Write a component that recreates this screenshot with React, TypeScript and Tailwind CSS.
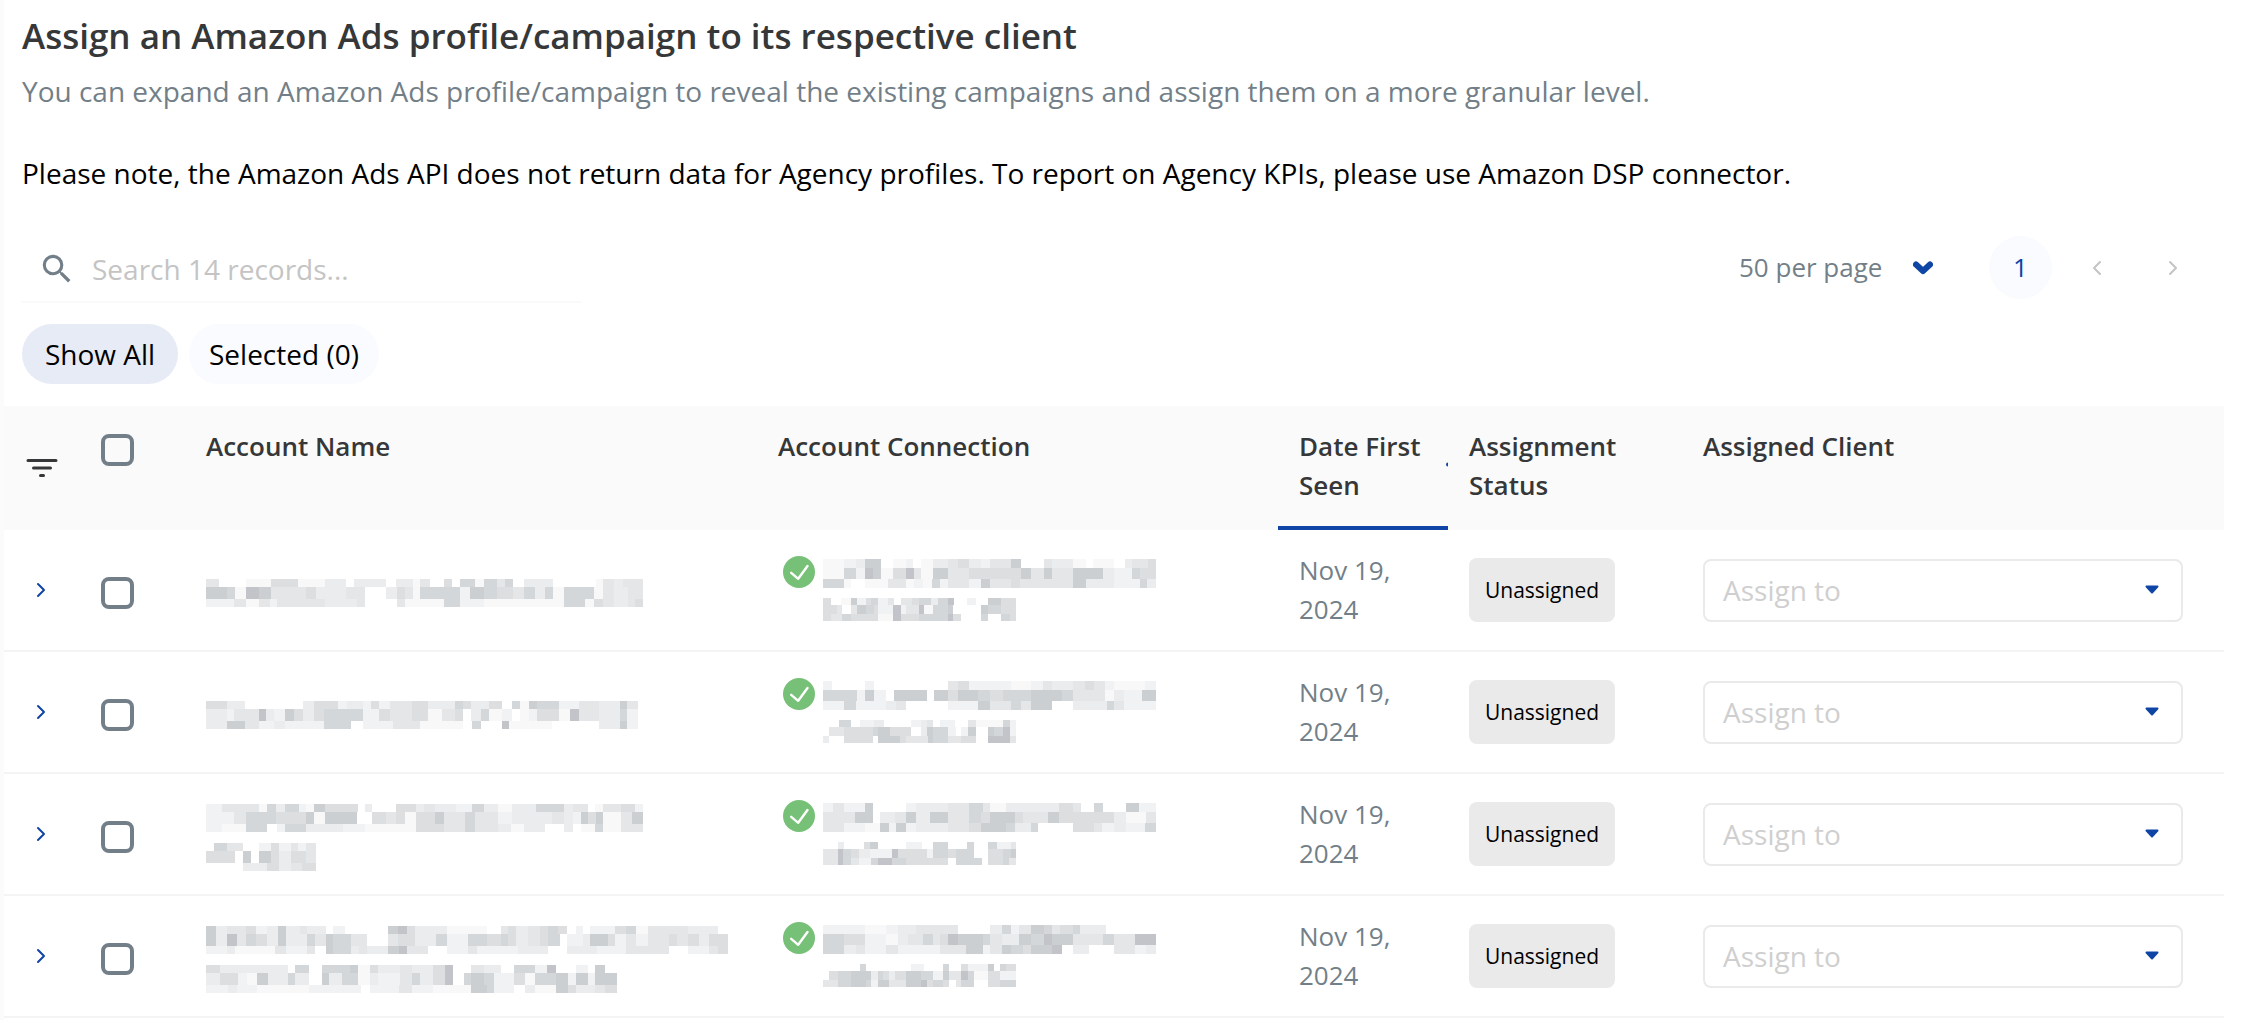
import React, { useState } from 'react';
import { MdSearch } from 'react-icons/md';

// shades used by the masked names, w is left blank
const shades: Record<string, string> = {
  a: '#f8f8f9', b: '#f1f2f4', c: '#ebecee', d: '#e5e6e8',
  e: '#dddee0', f: '#d4d7da', g: '#cccfd2', h: '#c2c4ca'
};

type MaskLine = { start: number; bands: string[] };

type Row = { id: number; name: MaskLine[]; connection: MaskLine[]; date: string; status: string };

// each band is a list of "end position + shade"
const rows: Row[] = [
  {
    id: 1,
    name: [
      { start: 18, bands: [
        '57d 138w 213a 294e 375a 438c 462w 495c 558c 588w 639c 660a 690d 732w 756e 780w 825f 852a 891f 915d 939f 972w 1059c 1188w 1209a 1242d 1269c 1329d',
        '81g 105f 138a 177h 213g 255d 318d 348e 438c 471d 495d 558w 591c 615e 639d 660a 780f 810b 852g 891f 939e 972d 1005f 1035c 1059f 1092a 1182f 1209a 1242d 1284c 1329d',
        '102b 138d 177a 210d 231b 255d 348d 375d 471c 495d 591w 615d 732a 780f 852b 1092a 1155f 1182a 1209e 1242d 1284c 1305d 1329e'
      ] }
    ],
    connection: [
      { start: 159, bands: [
        '222a 258b 285c 333g 369w 408a 429b 453w 489a 534c 564d 597e 633c 660b 723d 753g 822w 846d 909c 948a 969w 999a 1032a 1065w 1086c 1134d 1158e',
        '222a 258f 285b 309h 333g 369a 408e 432h 453d 489a 534g 597d 633e 660e 723e 753e 783g 822d 846g 909d 948g 999g 1032c 1086b 1110f 1158e',
        '222f 243a 285w 354a 408d 432a 459b 486a 510f 534b 597d 633b 660g 723d 750e 909d 948g 1032c 1110b 1131f 1158c'
      ] },
      { start: 156, bands: [
        '180e 210w 240a 258g 285b 300e 321f 351b 369d 390w 423d 444e 480f 501c 531f 549h 588w 615b 651w 690g 735e',
        '198e 213d 240w 258d 285g 309f 321e 366b 390h 405b 444d 459h 486a 531f 546g 570w 630w 651g 690f 735e',
        '180e 213d 240f 285e 321e 366a 390h 444e 459f 531f 546h 570e 630w 651f 690w 717f 735e'
      ] }
    ],
    date: 'Nov 19, 2024',
    status: 'Unassigned'
  },
  {
    id: 2,
    name: [
      { start: 18, bands: [
        '81e 135c 309w 342c 414e 441b 489c 513b 537e 570b 636d 684e 765c 789f 813e 867c 906e 936w 960f 987a 1011g 1077f 1137b 1197d 1260c 1281g 1314d',
        '81c 102b 177d 198h 222c 255b 282g 309e 342c 372e 462f 489f 513b 537b 570e 636d 684e 726a 765d 789e 813w 843c 867f 906a 936b 960w 987a 1011b 1077e 1110a 1137h 1176d 1197d 1260c 1281f 1314b',
        '81c 135g 177d 222b 255c 372b 453f 489w 579b 660d 726a 789a 816w 843f 906w 927h 1056a 1197w 1260c 1281g 1314b'
      ] }
    ],
    connection: [
      { start: 159, bands: [
        '186b 285w 312b 372w 534w 564d 597e 624b 723b 783a 819b 846d 909c 945d 972e 1005d 1032b 1125a 1158b',
        '222f 261f 285b 312g 348b 372w 429g 471g 492w 534g 564e 624g 660f 699e 783f 876g 909f 948d 1005d 1032a 1062c 1089b 1116b 1158g',
        '222b 258f 348b 378c 408d 471w 534w 624b 660g 723d 753f 783d 846g 909w 951c 1011c 1032f 1062d 1158b'
      ] },
      { start: 156, bands: [
        '204w 240f 267w 309b 339c 420w 450b 468c 486d 507w 552b 591w 615d 696a 717f 735b',
        '174w 219d 240e 306e 321f 357g 405e 420e 450w 468c 486g 531f 555b 570w 591b 615g 651w 669g 696f 717h 735b',
        '174c 219w 240e 306e 321w 387g 405e 450d 471d 486g 531f 570d 615e 651w 717h 735d'
      ] }
    ],
    date: 'Nov 19, 2024',
    status: 'Unassigned'
  },
  {
    id: 3,
    name: [
      { start: 12, bands: [
        '58b 166d 189a 215f 241c 282f 302b 325a 357g 406e 453e 473w 494c 563w 621e 645c 677d 738c 784b 819f 859c 900a 970c 1051f 1077c 1121d 1141w 1164a 1217d 1257e 1281b',
        '93b 128d 189f 215f 302e 325g 357a 450g 494w 534e 563d 589e 621a 677e 703g 764d 793f 859d 900b 970c 1016c 1051d 1077c 1101b 1121g 1144e 1164g 1217a 1249d 1281g',
        '58b 128a 189f 218w 241b 302f 409c 473b 589a 621a 703e 764d 793f 859d 897c 935a 996c 1051w 1077c 1101w 1141a 1164f 1217a 1281d'
      ] },
      { start: 12, bands: [
        '35w 73f 119d 166w 200b 224e 258b 278d 302b 331d',
        '35e 73e 96e 119w 142g 166w 200g 224e 258c 302e 331d',
        '119w 189c 224e 258c 290d 331e'
      ] }
    ],
    connection: [
      { start: 159, bands: [
        '189b 222d 285b 309g 408w 438b 534c 597d 639f 660d 708a 783c 867c 909e 933d 972w 999f 1068w 1107g 1158b',
        '222d 255d 309g 330w 375c 408d 438g 480c 534g 597d 633f 660e 735g 759e 804d 834d 867g 909e 972e 1032e 1068c 1128a 1158d',
        '222d 255b 285b 330a 357g 378b 408g 438b 534c 597d 633e 708g 735f 783c 804f 909w 972e 996d 1032b 1068c 1125b 1158f'
      ] },
      { start: 156, bands: [
        '201w 219c 279w 297e 321g 405w 453b 486w 531f 588w 609f 651w 678f 720b 735d',
        '201d 216h 240f 264e 297c 321b 363b 381h 405e 468e 486b 531f 555e 570f 609f 633w 651w 696e 720f 735g',
        '201d 216h 240f 264d 279b 300b 321f 363h 405f 468e 531e 555w 609f 633f 651w 696e 714f 735d'
      ] }
    ],
    date: 'Nov 19, 2024',
    status: 'Unassigned'
  },
  {
    id: 4,
    name: [
      { start: 17, bands: [
        '46g 78c 134d 163e 195b 226c 250g 290c 310d 366c 386w 421b 546w 575g 601h 624e 717c 833a 874w 894d 918e 951c 987d 1010e 1038f 1066e 1092w 1112b 1132w 1205b 1237e 1266f 1301a 1417d 1504c 1533w',
        '46g 78c 107h 134d 163f 195e 226c 250g 311c 334f 366d 386g 438f 485d 546w 575d 601e 624e 685c 717f 778b 833f 874e 894f 918e 951c 987d 1010e 1045f 1066w 1112b 1132c 1185g 1205e 1237b 1266d 1301b 1362d 1385e 1417d 1449e 1478c 1533e',
        '78b 102c 218a 250d 311b 334d 366w 386g 438f 462c 485d 546c 578g 601h 662d 717w 778b 804d 922b 1010c 1066w 1153c 1237b 1362d 1417w 1478b 1504d 1533e'
      ] },
      { start: 15, bands: [
        '55e 78c 134c 253c 273w 314f 351w 409f 433f 456g 491a 514e 578c 613d 674c 709e 732h 784w 822d 851c 871c 909w 970f 1005b 1031h 1089w 1124b 1144w 1173g 1208w',
        '55c 107e 134b 163a 195g 253c 273f 314c 351w 372g 409c 456f 491a 514c 578b 613d 636f 674c 709e 732h 764w 784f 822g 851f 909b 941e 970a 1031f 1066g 1089b 1124g 1144b 1208g',
        '78b 105c 163b 253a 314a 465b 491w 575b 613d 674b 784a 830g 851f 909b 941w 970c 1031a 1066g 1089e 1144c 1173d 1208e'
      ] }
    ],
    connection: [
      { start: 159, bands: [
        '222b 285b 348a 384b 438c 498d 564d 660w 696c 723f 747b 783d 822g 846f 870d 909e 930f 1008c 1158w',
        '222f 285e 348b 384a 414c 459d 489f 510d 534e 564h 639g 660f 696d 747c 783g 822f 846h 909g 930d 999d 1032f 1095d 1158h',
        '222f 258c 285d 348b 384d 438b 510b 588d 639g 660b 696d 723g 759f 783e 846g 876h 909w 957c 1032w 1095d 1128b 1158c'
      ] },
      { start: 156, bands: [
        '267w 285f 336w 420w 459b 516w 534f 570w 591e 651b 669g 687w 705f 735e',
        '174w 201e 240f 300g 321c 336f 354e 372c 405e 420g 450g 486f 516b 534g 570d 591h 609f 651a 687e 735b',
        '201d 240f 285g 300f 321b 354g 405d 450g 468h 486e 516f 534e 555w 570d 609f 651w 687e 735f'
      ] }
    ],
    date: 'Nov 19, 2024',
    status: 'Unassigned'
  }
];

const bandTop = [0, 3, 7];
const bandHeight = [3, 4, 3];

const Mask = ({ line, unit, className }: { line: MaskLine; unit: number; className: string }) => {
  const cells: { x: number; w: number; band: number; fill: string }[] = [];
  let end = line.start;
  line.bands.forEach((band, i) => {
    let x = line.start;
    band.split(' ').forEach(run => {
      const next = parseInt(run, 10);
      const key = run.slice(-1);
      if (key !== 'w') cells.push({ x, w: next - x, band: i, fill: shades[key] });
      x = next;
    });
    end = Math.max(end, x);
  });

  return (
    <svg
      className={className}
      style={{ width: Math.round((end - line.start) / unit) }}
      viewBox={`${line.start} 0 ${end - line.start} 10`}
      preserveAspectRatio="none"
      shapeRendering="crispEdges"
      aria-hidden="true"
    >
      {cells.map(c => (
        <rect key={`${c.band}-${c.x}`} x={c.x} y={bandTop[c.band]} width={c.w} height={bandHeight[c.band]} fill={c.fill} />
      ))}
    </svg>
  );
};

const Chevron = ({ left }: { left?: boolean }) => (
  <svg className="w-[10px] h-[16px]" viewBox="0 0 10 16" fill="none" stroke="currentColor" strokeWidth="2" strokeLinecap="round" strokeLinejoin="round">
    <path d={left ? 'M8 2 2 8l6 6' : 'M2 2l6 6-6 6'} />
  </svg>
);

const Checkbox = ({ label, checked, onChange }: { label: string; checked: boolean; onChange: () => void }) => (
  <input
    type="checkbox"
    aria-label={label}
    checked={checked}
    onChange={onChange}
    className="block appearance-none w-[33px] h-8 rounded-lg border-4 border-[#737f88] checked:bg-[#0f45a5] cursor-pointer"
  />
);

export default function App() {
  const [search, setSearch] = useState('');
  const [tab, setTab] = useState<'all' | 'selected'>('all');
  const [selected, setSelected] = useState<number[]>([]);

  const toggle = (id: number) => setSelected(s => (s.includes(id) ? s.filter(x => x !== id) : [...s, id]));
  const toggleAll = () => setSelected(s => (s.length === rows.length ? [] : rows.map(r => r.id)));

  const visible = tab === 'all' ? rows : rows.filter(r => selected.includes(r.id));

  return (
    <main className="min-h-screen bg-white border-l-4 border-[#fbfbfb] pr-5 font-['Open_Sans',sans-serif] text-[28px] text-black">
      <div className="pl-[18px] pt-3">
        <h1 className="text-[35px] leading-[48px] font-semibold text-[#363738]">Assign an Amazon Ads profile/campaign to its respective client</h1>
        <p className="mt-[11px] leading-10 text-[#737f88]">You can expand an Amazon Ads profile/campaign to reveal the existing campaigns and assign them on a more granular level.</p>
        <p className="mt-[42px] leading-10">Please note, the Amazon Ads API does not return data for Agency profiles. To report on Agency KPIs, please use Amazon DSP connector.</p>

        {/* Toolbar */}
        <div className="mt-[43px] flex items-start justify-between">
          <label className="flex items-center gap-4 w-[560px] h-[67px] pl-4 border-b-2 border-[#fafafa]">
            <MdSearch className="size-[38px] shrink-0 text-[#737f88]" />
            <input
              type="text"
              aria-label="Search records"
              placeholder="Search 14 records..."
              value={search}
              onChange={e => setSearch(e.target.value)}
              className="w-full bg-transparent outline-none placeholder:text-[#c4c4c4]"
            />
          </label>

          <div className="flex items-center gap-[13px] h-[63px] pr-5 text-[26px]">
            <div className="relative mr-[43px]">
              <select aria-label="Records per page" className="appearance-none w-[194px] bg-transparent text-[#737f88] outline-none">
                <option>50 per page</option>
                <option>100 per page</option>
              </select>
              <svg className="absolute right-0 top-1/2 -translate-y-1/2 w-5 h-[14px] pointer-events-none" viewBox="0 0 20 14" fill="none">
                <path d="M3 3.5l7 6.5 7-6.5" stroke="#0f45a5" strokeWidth="6" strokeLinecap="round" strokeLinejoin="round" />
              </svg>
            </div>
            <button className="size-[63px] rounded-full bg-[#fafbfe] text-[#0f45a5]">1</button>
            <button aria-label="Previous page" className="size-[63px] flex items-center justify-center text-[#c4c4c4]"><Chevron left /></button>
            <button aria-label="Next page" className="size-[63px] flex items-center justify-center text-[#c4c4c4]"><Chevron /></button>
          </div>
        </div>

        {/* Tabs */}
        <div className="mt-[21px] flex gap-[11px]">
          <button onClick={() => setTab('all')} className={`h-[60px] min-w-[156px] px-5 rounded-full ${tab === 'all' ? 'bg-[#e7ebf6]' : 'bg-[#fafbfe]'}`}>
            Show All
          </button>
          <button onClick={() => setTab('selected')} className={`h-[60px] min-w-[156px] px-5 rounded-full ${tab === 'selected' ? 'bg-[#e7ebf6]' : 'bg-[#fafbfe]'}`}>
            Selected ({selected.length})
          </button>
        </div>
      </div>

      <table className="mt-[22px] w-full table-fixed border-separate border-spacing-0 text-[26px] leading-[39px]">
        <colgroup>
          <col className="w-[77px]" />
          <col className="w-[104px]" />
          <col />
          <col className="w-[521px]" />
          <col className="w-[170px]" />
          <col className="w-[234px]" />
          <col className="w-[542px]" />
        </colgroup>
        <thead>
          <tr className="h-[124px] bg-[#fafafa] text-left align-top text-[#363738]">
            <th className="align-middle pl-[22px]">
              <button aria-label="Filter" className="block">
                <svg className="w-8 h-5" viewBox="0 0 32 20" fill="none" stroke="#363738" strokeWidth="3" strokeLinecap="round">
                  <path d="M2 2.5h28M7.500 10h17M14.500 17.500h3" />
                </svg>
              </button>
            </th>
            <th className="pl-5 pt-7"><Checkbox label="Select all" checked={selected.length === rows.length} onChange={toggleAll} /></th>
            <th className="pl-[21px] pt-[21px] font-semibold">Account Name</th>
            <th className="pl-[21px] pt-[21px] font-semibold">Account Connection</th>
            <th className="relative pl-[21px] pt-[21px] pr-5 font-semibold border-b-4 border-[#0f45a5]">
              Date First Seen
              {/* tip of the sort arrow, cut by the column edge */}
              <svg className="absolute right-0 top-14 w-[2px] h-[5px]" viewBox="0 0 2 5"><circle cx="2" cy="2.500" r="2" fill="#0f45a5" /></svg>
            </th>
            <th className="pl-[21px] pt-[21px] pr-10 font-semibold">Assignment Status</th>
            <th className="pl-[21px] pt-[21px] font-semibold">Assigned Client</th>
          </tr>
        </thead>
        <tbody>
          {visible.map(row => (
            <tr key={row.id} className="h-[122px] *:border-b-2 *:border-[#f4f4f5] text-[#737f88]">
              <td className="pl-8">
                <button aria-label="Expand row" className="block text-[#0f45a5]"><Chevron /></button>
              </td>
              <td className="pl-5 pt-1.5"><Checkbox label={`Select account ${row.id}`} checked={selected.includes(row.id)} onChange={() => toggle(row.id)} /></td>
              <td className="pl-[21px] pt-1.5">
                <div className="flex flex-col gap-[11px]">
                  {row.name.map((line, i) => <Mask key={i} line={line} unit={row.id > 2 ? 2.904 : 3} className="h-7" />)}
                </div>
              </td>
              <td className="pl-[26px] pt-[26px] align-top">
                <div className="flex gap-2">
                  <svg className="size-8 shrink-0" viewBox="0 0 32 32" fill="none">
                    <circle cx="16" cy="16" r="16" fill="#77c078" />
                    <path d="M8.200 16.800l7 6L24.500 10" stroke="#fff" strokeWidth="2.400" strokeLinecap="round" strokeLinejoin="round" />
                  </svg>
                  <div className="flex flex-col gap-[10px] pt-[3px]">
                    <Mask line={row.connection[0]} unit={3} className="h-[29px]" />
                    <Mask line={row.connection[1]} unit={3} className="h-[23px]" />
                  </div>
                </div>
              </td>
              <td className="pl-[21px] pr-10">{row.date}</td>
              <td className="pl-[21px]">
                <span className="flex items-center justify-center w-[146px] h-16 rounded-lg bg-[#eaeaea] text-[21px] text-black">{row.status}</span>
              </td>
              <td className="pl-[21px] pr-[41px]">
                <div className="relative">
                  <select aria-label="Assign to" className="block appearance-none w-full h-[63px] pl-[18px] pr-12 rounded-lg border-2 border-[#eaeaea] bg-white text-[28px] text-[#cfcfcf] outline-none">
                    <option>Assign to</option>
                  </select>
                  <svg className="absolute right-6 top-[26px] w-[14px] h-[9px] pointer-events-none" viewBox="0 0 14 9">
                    <path d="M1.500 1.500h11L7 7.500z" fill="#0f45a5" stroke="#0f45a5" strokeWidth="2" strokeLinejoin="round" />
                  </svg>
                </div>
              </td>
            </tr>
          ))}
        </tbody>
      </table>
    </main>
  );
}
